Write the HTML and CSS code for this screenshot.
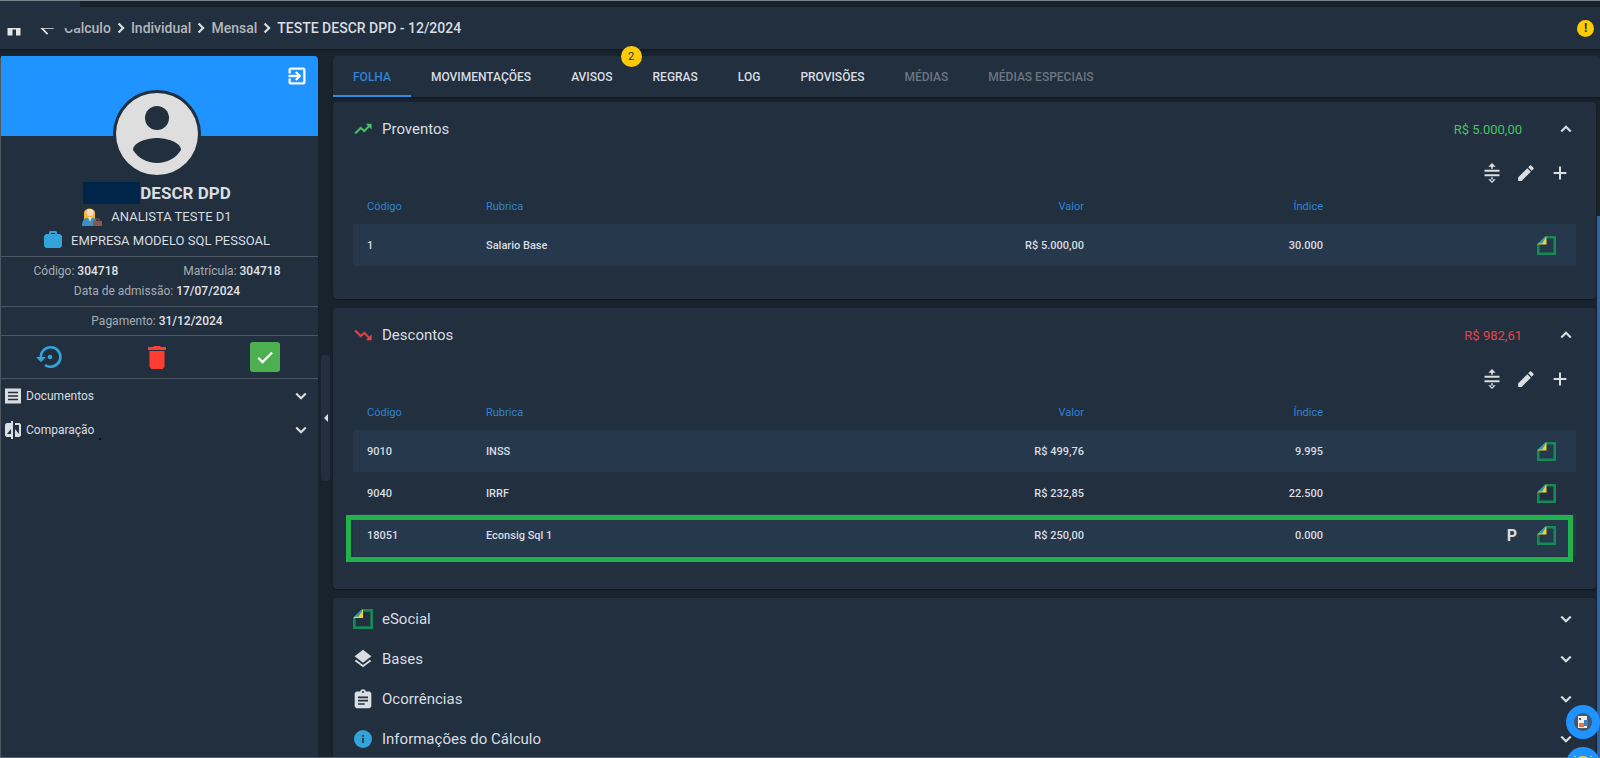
FILE: index.html
```html
<!DOCTYPE html>
<html lang="pt-BR">
<head>
    <meta charset="UTF-8">
    <meta name="viewport" content="width=device-width, initial-scale=1.0">
    <title>Cálculo Individual</title>
    <link rel="stylesheet" href="styles.css">
</head>
<body>
    <!-- Shared icons -->
    <svg class="sprite" width="0" height="0">
        <symbol id="down" viewBox="0 0 24 24"><path d="M7.200 8.200 12 13l4.800-4.800L18.600 10 12 16.600 5.400 10z"/></symbol>
        <symbol id="up" viewBox="0 0 24 24"><path d="M7.200 15.800 12 11l4.800 4.800 1.800-1.800L12 7.400 5.400 14z"/></symbol>
        <symbol id="right" viewBox="0 0 24 24"><path d="M5.500 4.400 8.600 1.300 19.300 12 8.600 22.700l-3.100-3.100 7.600-7.600z"/></symbol>
        <symbol id="expand" viewBox="0 0 24 24"><path d="M3 8h18v2.600H3zM3 13.400h18V16H3zM11 2.500h2V7h-2zM11 17h2v4.500h-2zM12 0l4.500 4.500H7.500zM12 24l4.500-4.500H7.500z"/></symbol>
        <symbol id="edit" viewBox="0 0 24 24"><path d="M2.500 17.300V21.500h4.200L17.800 10.400l-4.200-4.200zM21 7.200c.4-.4.4-1 0-1.400l-2.800-2.800c-.4-.4-1-.4-1.400 0l-2.200 2.200 4.200 4.200z"/></symbol>
        <symbol id="add" viewBox="0 0 24 24"><path d="M19.700 13.200h-6.500v6.500h-2.400v-6.500H4.300v-2.400h6.500V4.300h2.400v6.500h6.500z"/></symbol>
        <symbol id="esocial" viewBox="0 0 18 18">
            <path d="M9 1.200h7.800v15.600H1.200V8" fill="none" stroke="#148a55" stroke-width="2.400"/>
            <path d="M9 0v8H0z" fill="#f2d32c"/>
            <path d="M1 7 8 0v2L5 7z" fill="#2a9bb0"/>
        </symbol>
    </svg>

    <header class="topbar">
        <a href="#" class="home" aria-label="Início"><svg class="icon-16" viewBox="0 0 16 16"><path d="M8 0 16 7h-1.500v8.500H10V9.500H6.500v6H1.500V7H0z"/></svg></a>
        <a href="#" class="back" aria-label="Voltar"><svg class="icon-20" viewBox="0 0 24 24"><path d="M20 11H7.800l5.600-5.600L12 4l-8 8 8 8 1.400-1.400L7.800 13H20z"/></svg></a>
        <nav class="breadcrumb">
            <a href="#">Cálculo</a>
            <svg><use href="#right"/></svg>
            <a href="#">Individual</a>
            <svg><use href="#right"/></svg>
            <a href="#">Mensal</a>
            <svg><use href="#right"/></svg>
            <span class="current">TESTE DESCR DPD - 12/2024</span>
        </nav>
        <button class="alert" aria-label="Alertas">!</button>
        <div class="topbar-cover"></div>
    </header>

    <div class="layout">
        <aside class="sidebar">
            <div class="cover">
                <button class="exit" aria-label="Sair"><svg viewBox="0 0 24 24"><path d="M10.100 15.600 11.500 17l5-5-5-5-1.400 1.400L12.700 11H3v2h9.700zM19 3H5a2 2 0 0 0-2 2v4h2V5h14v14H5v-4H3v4a2 2 0 0 0 2 2h14a2 2 0 0 0 2-2V5a2 2 0 0 0-2-2z" stroke="currentColor" stroke-width=".5"/></svg></button>
            </div>
            <div class="person">
                <div class="avatar">
                    <svg viewBox="0 0 82 82">
                        <circle cx="41" cy="41" r="41" fill="#dedede"/>
                        <circle cx="41" cy="25" r="12" fill="#212f3f"/>
                        <path d="M17 57c0-8 15-12 24-12s24 4 24 12c-5 8-14 13-24 13S22 65 17 57z" fill="#212f3f"/>
                    </svg>
                </div>
                <h1><span class="mask"></span>DESCR DPD</h1>
                <p>
                    <svg class="worker" viewBox="0 0 20 20">
                        <path d="M2 14V6a6 6 0 0 1 11 0v8z" fill="#f5b52e"/>
                        <circle cx="8" cy="6.500" r="3.500" fill="#fbd9c2"/>
                        <path d="M0 20c0-5 2-8 5-8h6c3 0 4 3 4 8z" fill="#3c8fc0"/>
                        <path d="M6 11h4l-2 5z" fill="#fbd9c2"/>
                        <path d="M11 15h9v5h-9z" fill="#8f5546"/>
                        <path d="M13 15v-2h4v2" fill="none" stroke="#8f5546"/>
                    </svg>
                    ANALISTA TESTE D1
                </p>
                <p>
                    <svg class="company" viewBox="0 0 18 18"><path d="M5 3V1l1-1h6l1 1v2h3l2 2v10l-2 2H2l-2-2V5l2-2zm2 0h4V2H7z" fill="#33a3d9"/></svg>
                    EMPRESA MODELO SQL PESSOAL
                </p>
            </div>
            <div class="details">
                <div class="pair"><span>Código: <b>304718</b></span><span>Matrícula: <b>304718</b></span></div>
                <div>Data de admissão: <b>17/07/2024</b></div>
            </div>
            <div class="payment">Pagamento: <b>31/12/2024</b></div>
            <div class="actions">
                <button aria-label="Recalcular"><svg class="restore" viewBox="0 0 24 24"><path d="M14 12a2 2 0 1 0-4 0 2 2 0 0 0 4 0zM12.500 2.500a9.500 9.500 0 0 0-9.500 9.500H0l4.300 4.500L8.500 12H5.300a7.200 7.200 0 1 1 3.100 5.900L7 19.700A9.500 9.500 0 1 0 12.500 2.500z"/></svg></button>
                <button aria-label="Excluir"><svg class="trash" viewBox="0 0 18 23"><path d="M0 1h5l1-1h6l1 1h5v3H0zM1.500 5h15v16l-2 2h-11l-2-2z"/></svg></button>
                <button class="confirm" aria-label="Confirmar"><svg class="icon-20" viewBox="0 0 24 24"><path d="M9 16.200 4.800 12l-1.900 1.900L9 20 21.500 7.500l-1.900-1.900z"/></svg></button>
            </div>
            <div class="menu">
                <button>
                    <svg class="icon-16" viewBox="0 0 16 16"><path d="M0 0l1 1 1-1 1 1 1-1 1 1 1-1 1 1 1-1 1 1 1-1 1 1 1-1 1 1 1-1 1 1 1-1v16l-1-1-1 1-1-1-1 1-1-1-1 1-1-1-1 1-1-1-1 1-1-1-1 1-1-1-1 1-1-1-1 1z"/><path d="M3 4.500h10M3 8h10M3 11.500h10" stroke="#212f3f" stroke-width="1.500"/></svg>
                    Documentos
                    <svg class="icon-20 chevron"><use href="#down"/></svg>
                </button>
                <button>
                    <svg class="icon-16 compare" viewBox="0 0 16 18"><path d="M6 2H1.500L0 3.500v11L1.500 16H6v2h2V0H6zm0 11H2l4-5zM10 2v2h4v9l-4-5v8h4.500l1.500-1.500v-11L14.500 2z"/></svg>
                    Comparação
                    <span class="dot"></span>
                    <svg class="icon-20 chevron"><use href="#down"/></svg>
                </button>
            </div>
        </aside>

        <button class="collapse" aria-label="Recolher"><svg viewBox="0 0 4 8"><path d="M4 0v8L0 4z"/></svg></button>

        <main class="content">
            <nav class="tabs">
                <button class="active">FOLHA</button>
                <button>MOVIMENTAÇÕES</button>
                <button>AVISOS<span class="badge">2</span></button>
                <button>REGRAS</button>
                <button>LOG</button>
                <button>PROVISÕES</button>
                <button disabled>MÉDIAS</button>
                <button disabled>MÉDIAS ESPECIAIS</button>
            </nav>

            <section class="card">
                <div class="card-header">
                    <svg class="card-icon green" viewBox="0 0 24 24"><path d="m16 6 2.300 2.300-4.900 4.900-4-4L2 16.600 3.400 18l6-6 4 4 6.300-6.300L22 12V6z" stroke="currentColor" stroke-width=".6"/></svg>
                    <h2>Proventos</h2>
                    <span class="amount green">R$ 5.000,00</span>
                    <button aria-label="Recolher"><svg class="icon-20"><use href="#up"/></svg></button>
                </div>
                <div class="toolbar">
                    <button aria-label="Expandir linhas"><svg class="icon-20"><use href="#expand"/></svg></button>
                    <button aria-label="Editar"><svg class="icon-20"><use href="#edit"/></svg></button>
                    <button aria-label="Adicionar"><svg class="icon-20"><use href="#add"/></svg></button>
                </div>
                <table>
                    <thead>
                        <tr><th class="code">Código</th><th>Rubrica</th><th class="num">Valor</th><th class="num">Índice</th><th class="flags"></th></tr>
                    </thead>
                    <tbody>
                        <tr><td>1</td><td>Salario Base</td><td class="num">R$ 5.000,00</td><td class="num">30.000</td><td class="flags"><svg><use href="#esocial"/></svg></td></tr>
                    </tbody>
                </table>
            </section>

            <section class="card">
                <div class="card-header">
                    <svg class="card-icon red" viewBox="0 0 24 24"><path d="m16 18 2.300-2.300-4.900-4.900-4 4L2 7.400 3.400 6l6 6 4-4 6.300 6.300L22 12v6z" stroke="currentColor" stroke-width=".6"/></svg>
                    <h2>Descontos</h2>
                    <span class="amount red">R$ 982,61</span>
                    <button aria-label="Recolher"><svg class="icon-20"><use href="#up"/></svg></button>
                </div>
                <div class="toolbar">
                    <button aria-label="Expandir linhas"><svg class="icon-20"><use href="#expand"/></svg></button>
                    <button aria-label="Editar"><svg class="icon-20"><use href="#edit"/></svg></button>
                    <button aria-label="Adicionar"><svg class="icon-20"><use href="#add"/></svg></button>
                </div>
                <div class="table-wrap">
                    <table>
                        <thead>
                            <tr><th class="code">Código</th><th>Rubrica</th><th class="num">Valor</th><th class="num">Índice</th><th class="flags"></th></tr>
                        </thead>
                        <tbody>
                            <tr><td>9010</td><td>INSS</td><td class="num">R$ 499,76</td><td class="num">9.995</td><td class="flags"><svg><use href="#esocial"/></svg></td></tr>
                            <tr><td>9040</td><td>IRRF</td><td class="num">R$ 232,85</td><td class="num">22.500</td><td class="flags"><svg><use href="#esocial"/></svg></td></tr>
                            <tr><td>18051</td><td>Econsig Sql 1</td><td class="num">R$ 250,00</td><td class="num">0.000</td><td class="flags"><b>P</b><svg><use href="#esocial"/></svg></td></tr>
                        </tbody>
                    </table>
                    <div class="highlight"></div>
                </div>
            </section>

            <section class="card accordion">
                <button>
                    <svg class="card-icon"><use href="#esocial"/></svg>
                    eSocial
                    <svg class="icon-20 chevron"><use href="#down"/></svg>
                </button>
                <button>
                    <svg class="card-icon" viewBox="0 0 24 24"><path d="m12 19.300-8.200-6.400L2 14.300l10 7.700 10-7.700-1.800-1.400zM12 16.500l10-7.700L12 1 2 8.800z"/></svg>
                    Bases
                    <svg class="icon-20 chevron"><use href="#down"/></svg>
                </button>
                <button>
                    <svg class="card-icon" viewBox="0 0 24 24"><path d="M20 3h-4.500a3.600 3.600 0 0 0-7 0H4L2 5v16l2 2h16l2-2V5zm-8-.5a1.200 1.200 0 1 1 0 2.400 1.200 1.200 0 0 1 0-2.400zM14 19H6v-2h8zm4-4H6v-2h12zm0-4H6V9h12z"/></svg>
                    Ocorrências
                    <svg class="icon-20 chevron"><use href="#down"/></svg>
                </button>
                <button>
                    <svg class="card-icon" viewBox="0 0 20 20"><circle cx="10" cy="10" r="9" fill="#33a3d9"/><path d="M9.200 9h1.600v5H9.200zM9.200 6h1.600v1.700H9.200z" fill="#212f3f"/></svg>
                    Informações do Cálculo
                    <svg class="icon-20 chevron"><use href="#down"/></svg>
                </button>
            </section>
        </main>
    </div>

    <div class="scroll-thumb"></div>

    <div class="fabs">
        <button aria-label="Relatório">
            <svg viewBox="0 0 18 18"><circle cx="9" cy="9" r="9" fill="#45576a"/><path d="M4 3h9v12H4z" fill="#eee"/><path d="M5 5h2v2H5z" fill="#555"/><path d="M5 10h5v4H5z" fill="#e8763a"/><path d="M10 7h4v6h-4z" fill="#3a7fc0"/></svg>
        </button>
        <button aria-label="Ajuda">
            <svg viewBox="0 0 18 18"><circle cx="9" cy="9" r="8" fill="#e6d250"/><path d="M0 1l2 1M18 1l-2 1" stroke="#e6d250"/></svg>
        </button>
    </div>
</body>
</html>
```
FILE: styles.css
```css
* {
    box-sizing: border-box;
}
body {
    margin: 0;
    height: 100vh;
    overflow: hidden;
    display: flex;
    flex-direction: column;
    background-color: #19232d;
    color: #dadde1;
    font-family: Roboto, Arial, sans-serif;
    font-size: 13px;
    border-top: 1px solid #78828a;
    border-bottom: 1px solid #59636e;
}
button {
    background: none;
    border: none;
    padding: 0;
    color: inherit;
    font: inherit;
    cursor: pointer;
}
svg {
    display: block;
    flex: none;
    fill: currentColor;
}
h1, h2, p {
    margin: 0;
}
.sprite {
    position: absolute;
}
.icon-16 {
    width: 16px;
    height: 16px;
}
.icon-20 {
    width: 20px;
    height: 20px;
}
.green {
    color: #4bc461;
}
.red {
    color: #e9434a;
}

/* Top bar */
.topbar {
    position: relative;
    flex: none;
    display: flex;
    align-items: center;
    height: 42px;
    margin-top: 6px;
    padding: 0 6px;
    background-color: #212f3f;
    box-shadow: 0 1px 2px #10171e;
}
.topbar a {
    color: #b4b7ba;
    text-decoration: none;
}
.topbar .home, .topbar .back {
    color: #e4e4e4;
}
.back {
    margin: 0 7px 0 15px;
}
.breadcrumb {
    display: flex;
    align-items: center;
    gap: 4px;
    font-size: 14px;
    font-weight: 500;
}
.breadcrumb svg {
    width: 12px;
    height: 12px;
}
.alert {
    width: 17px;
    height: 17px;
    margin-left: auto;
    border-radius: 50%;
    background-color: #ffcb05;
    color: #212f3f;
    font-size: 12px;
    font-weight: bold;
}
/* Hides the top left corner of the bar */
.topbar-cover {
    position: absolute;
    left: 0;
    top: -7px;
    width: 80px;
    height: 28px;
    background-color: #212f3f;
}

.layout {
    flex: 1;
    display: flex;
    min-height: 0;
    padding: 7px 4px 0 0;
}

/* Sidebar */
.sidebar {
    width: 318px;
    flex: none;
    background-color: #212f3f;
    border-left: 1px solid #4b5661;
    border-radius: 4px 4px 0 0;
    text-align: center;
}
.cover {
    display: flex;
    justify-content: flex-end;
    align-items: flex-start;
    height: 80px;
    padding: 9px 10px;
    background-color: #1f93ff;
    border-radius: 0 4px 0 0;
    color: white;
}
.exit svg {
    width: 22px;
    height: 22px;
}
.avatar {
    width: 88px;
    height: 88px;
    margin: -46px auto 4px;
    padding: 3px;
    border-radius: 50%;
    background-color: #212f3f;
    position: relative;
}
.person {
    padding: 0 5px 4px 0;
    border-bottom: 1px solid #4b5661;
}
.person h1 {
    display: flex;
    justify-content: center;
    font-size: 17px;
    line-height: 22px;
}
.person p {
    display: flex;
    justify-content: center;
    align-items: center;
    gap: 9px;
    height: 24px;
}
.mask {
    width: 57px;
    height: 22px;
    background-color: #00254b;
}
.worker {
    width: 20px;
    height: 20px;
}
.company {
    width: 18px;
    height: 18px;
}
.details, .payment {
    padding: 4px 5px 4px 0;
    border-bottom: 1px solid #4b5661;
    color: #a7adb4;
    font-size: 12px;
    line-height: 20px;
}
.details {
    padding-bottom: 5px;
}
.details b, .payment b {
    color: #e0e4e8;
    font-weight: 500;
}
.pair {
    display: flex;
    justify-content: space-around;
}
.actions {
    display: flex;
    justify-content: space-between;
    align-items: center;
    height: 43px;
    padding: 0 38px 0 35px;
    border-bottom: 1px solid #4b5661;
}
.restore {
    width: 28px;
    height: 28px;
    color: #33a3d9;
}
.trash {
    width: 18px;
    height: 23px;
    color: #ff3d32;
}
.confirm {
    display: flex;
    align-items: center;
    justify-content: center;
    width: 30px;
    height: 30px;
    border-radius: 3px;
    background-color: #4caf50;
    color: white;
}
.menu button {
    display: flex;
    align-items: center;
    gap: 5px;
    width: 100%;
    height: 34px;
    padding: 0 7px 0 4px;
    font-size: 12px;
}
.menu .compare {
    height: 18px;
}
.dot {
    width: 2px;
    height: 2px;
    margin-top: 18px;
    background-color: #05080b;
}
.chevron {
    margin-left: auto;
}
.collapse {
    display: flex;
    align-items: center;
    justify-content: center;
    flex: none;
    width: 9px;
    height: 126px;
    margin: 299px 3px 0;
    border-radius: 4px;
    background-color: #212f3f;
}
.collapse svg {
    width: 4px;
    height: 8px;
}

/* Content */
.content {
    flex: 1;
    min-width: 0;
}
.tabs {
    display: flex;
    height: 41px;
    margin-right: -4px;
    background-color: #212f3f;
    border-radius: 4px 4px 0 0;
    box-shadow: 0 1px 2px #10171e;
}
.tabs button {
    position: relative;
    padding: 0 20px;
    font-size: 12px;
    font-weight: 500;
}
.tabs .active {
    color: #2f83d6;
    border-bottom: 2px solid #2f8de6;
    padding-top: 2px;
}
.tabs button:disabled {
    color: #6c7680;
}
.badge {
    position: absolute;
    top: -10px;
    right: -9px;
    width: 21px;
    border-radius: 50%;
    background-color: #ffcb05;
    color: #212f3f;
    font-size: 11px;
    font-weight: normal;
    line-height: 21px;
}
.card {
    margin-bottom: 9px;
    padding: 7px 20px 33px;
    background-color: #212f3f;
    border-radius: 4px;
    box-shadow: 0 1px 2px #10171e;
}
.tabs + .card {
    margin-top: 5px;
}
.card-header {
    display: flex;
    align-items: center;
    height: 40px;
}
.card-icon {
    width: 20px;
    height: 20px;
    margin-right: 9px;
}
.card-header h2, .accordion button {
    font-size: 15px;
    font-weight: normal;
}
.amount {
    margin: 0 34px 0 auto;
}
.toolbar {
    display: flex;
    justify-content: flex-end;
    gap: 14px;
    padding: 14px 6px 14px 0;
}
table {
    width: 100%;
    border-collapse: collapse;
    table-layout: fixed;
    font-size: 11px;
}
th, td {
    padding: 0 14px;
    text-align: left;
    font-weight: 500;
}
th {
    height: 27px;
    padding-bottom: 8px;
    color: #2f83d6;
    font-weight: normal;
}
td {
    height: 42px;
}
tbody tr:nth-child(odd) {
    background-color: #26384c;
}
th.code {
    width: 119px;
}
.num {
    text-align: right;
}
th.num, th.flags {
    width: 239px;
}
td.flags {
    padding-right: 20px;
    text-align: right;
}
td.flags svg {
    display: inline-block;
    width: 19px;
    height: 19px;
    vertical-align: middle;
}
td.flags b {
    margin-right: 20px;
    font-size: 16px;
    vertical-align: middle;
}
.table-wrap {
    position: relative;
}
/* Frame around the last row */
.highlight {
    position: absolute;
    left: -7px;
    right: 3px;
    bottom: -6px;
    height: 47px;
    border: 5px solid #22b24c;
}
.accordion {
    padding: 1px 20px;
}
.accordion button {
    display: flex;
    align-items: center;
    width: 100%;
    height: 40px;
}

.scroll-thumb {
    position: fixed;
    top: 216px;
    right: 0;
    bottom: 1px;
    width: 3px;
    background-color: #2a65a8;
}
.fabs {
    position: fixed;
    top: 705px;
    right: 0;
    display: flex;
    flex-direction: column;
    gap: 8px;
}
.fabs button {
    display: flex;
    align-items: center;
    justify-content: center;
    width: 34px;
    height: 34px;
    border-radius: 50%;
    background-color: #1f93ff;
}
.fabs svg {
    width: 18px;
    height: 18px;
}
```
